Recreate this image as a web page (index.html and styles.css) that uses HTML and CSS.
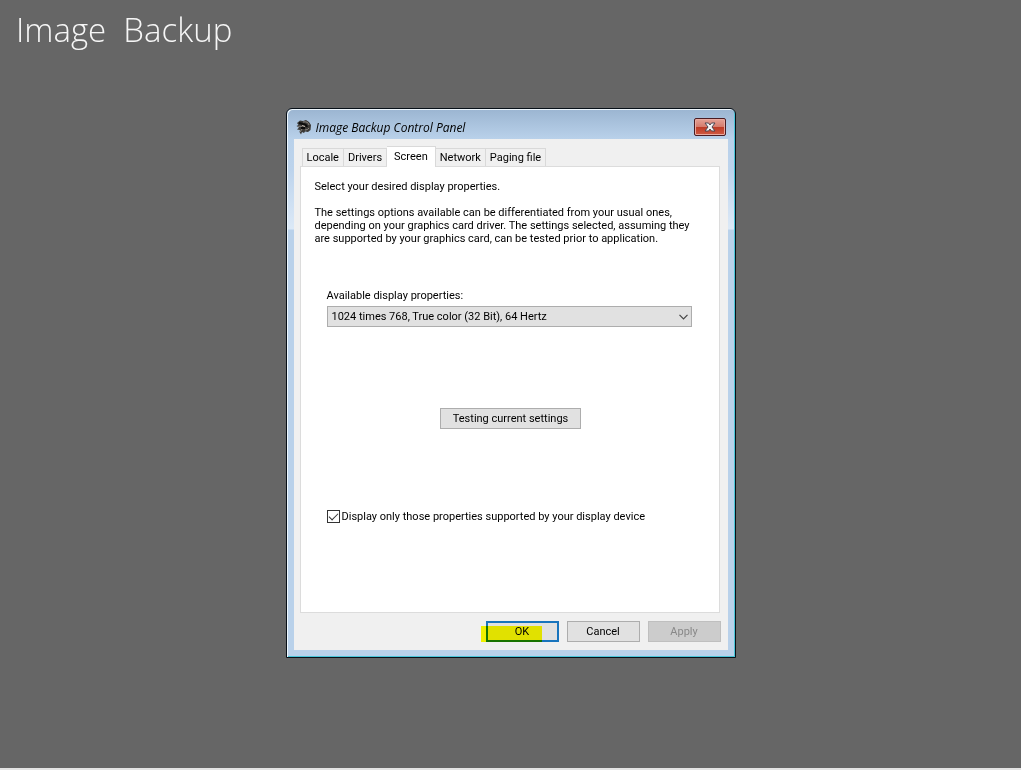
FILE: index.html
```html
<!DOCTYPE html>
<html lang="en">
<head>
<meta charset="utf-8">
<title>Image Backup</title>
<link rel="stylesheet" href="styles.css">
</head>
<body>
<div class="desktop">
  <h1 class="brand">Image&nbsp; Backup</h1>
  <main class="stage">
    <section class="window" aria-labelledby="window-title">
      <header class="titlebar">
        <svg class="app-icon" viewBox="0 0 16 16" width="16" height="16" aria-hidden="true">
          <path d="M1 4L4 1.500L7 2L10 1L13 3L15 6L14.500 11L12 13L9 12.500L8 14L6 13L5 15.500L3.500 13L4 11L1 10.500L3 8.500L.5 7L2.500 6Z" fill="#3b3936"/>
          <path d="M7 3Q12 2 13 6M2 8Q4 6 6 8M9 11Q12 11 13 9M4 13L6 10" fill="none" stroke="#8b8782" stroke-width="1"/>
          <path d="M3 4L7 5Q10 5 11 8M5 9L9 9" fill="none" stroke="#0c0c0c" stroke-width="2"/>
          <path d="M6 6.500L9 7.500" stroke="#c9beb2" stroke-width="1"/>
        </svg>
        <h2 class="window-title" id="window-title">Image Backup Control Panel</h2>
        <button class="close" type="button" aria-label="Close">
          <svg viewBox="0 0 12 10" width="12" height="10" aria-hidden="true">
            <path d="M1 1H4.500L6 3L7.500 1H11L8 5L11 9H7.500L6 7L4.500 9H1L4 5Z" fill="#f4f4f4" stroke="#4c4652" stroke-width="1"/>
          </svg>
        </button>
      </header>
      <form class="client">
        <div class="tabs" role="tablist">
          <button class="tab" type="button" role="tab">Locale</button>
          <button class="tab" type="button" role="tab">Drivers</button>
          <button class="tab tab-active" type="button" role="tab" aria-selected="true">Screen</button>
          <button class="tab" type="button" role="tab">Network</button>
          <button class="tab" type="button" role="tab">Paging file</button>
        </div>
        <div class="panel" role="tabpanel">
          <p class="lead">Select your desired display properties.</p>
          <p class="hint">The settings options available can be differentiated from your usual ones,<br>depending on your graphics card driver. The settings selected, assuming they<br>are supported by your graphics card, can be tested prior to application.</p>
          <div class="field">
            <label for="mode">Available display properties:</label>
            <div class="select-wrap">
              <select class="select" id="mode"><option>1024 times 768, True color (32 Bit), 64 Hertz</option></select>
              <svg class="chevron" viewBox="0 0 9 6" width="9" height="6" aria-hidden="true"><path d="M.5 .8L4.500 4.800L8.500 .8" fill="none" stroke="#444" stroke-width="1.200"/></svg>
            </div>
          </div>
          <button class="button test" type="button">Testing current settings</button>
          <label class="check"><input class="checkbox" type="checkbox" checked>Display only those properties supported by your display device</label>
        </div>
        <footer class="actions">
          <button class="button action ok" type="button">OK</button>
          <button class="button action" type="button">Cancel</button>
          <button class="button action" type="button" disabled>Apply</button>
        </footer>
      </form>
    </section>
  </main>
</div>
</body>
</html>
```
FILE: styles.css
```css
* { box-sizing: border-box; }
body {
  margin: 0;
  background: #666;
  color: #000;
  font: 11px/13px Roboto, "Liberation Sans", sans-serif;
}
h1, h2, p { margin: 0; }
button, select { font: inherit; color: inherit; }
.desktop {
  min-height: 100vh;
  border-bottom: 2px solid #e4e4e4;
}
.brand {
  padding: 4px 16px 0;
  color: #f6f6f6;
  font: 300 33px/52px "Open Sans", sans-serif;
}
.stage {
  display: flex;
  justify-content: center;
  padding: 52px 16px 16px;
}
.window {
  width: 450px;
  max-width: 100%;
  padding: 0 7px 7px;
  border: 1px solid #081018;
  border-radius: 6px 6px 0 0;
  background: linear-gradient(#9bb5d1, #b9d1ea 30px, #bcd3ec 60px, #dce9f7 120px, #b9d1ea 121px);
  box-shadow: inset 1px 1px #eef7fd, inset -1px -1px #49c5d8;
}
.titlebar {
  display: flex;
  align-items: center;
  height: 30px;
  padding: 6px 2px 0;
}
.window-title {
  flex: 1;
  margin-left: 4px;
  padding-top: 1px;
  font: italic 12px/16px "Open Sans", "Noto Sans", sans-serif;
}
.close {
  display: grid;
  place-items: center;
  width: 32px;
  height: 18px;
  padding: 0;
  border: 1px solid #4a1c22;
  border-radius: 2px;
  background: linear-gradient(#e5a296, #d57c6d 48%, #bd3b26 52%, #d05a42);
  box-shadow: inset 0 0 0 1px #e9aaa0;
}
.client {
  padding: 7px 8px 8px 6px;
  background: #f0f0f0;
}
.tabs {
  display: flex;
  align-items: flex-end;
  padding-left: 2px;
}
.tab {
  height: 18px;
  padding: 0 4px;
  border: 1px solid #d9d9d9;
  border-width: 1px 1px 0 0;
  background: #f0f0f0;
}
.tab:first-child { border-left-width: 1px; }
.tab-active {
  position: relative;
  height: 21px;
  margin: 0 0 -1px;
  padding: 0 7px 2px;
  background: #fff;
}
.panel {
  display: flex;
  flex-direction: column;
  height: 447px;
  padding: 13px 12px 0 14px;
  border: 1px solid #dcdcdc;
  background: #fff;
}
.hint { margin-top: 13px; }
.field {
  margin: 44px 15px 0 12px;
}
.select-wrap {
  display: grid;
  align-items: center;
  margin-top: 4px;
}
.select {
  grid-area: 1 / 1;
  appearance: none;
  width: 100%;
  height: 21px;
  padding: 0 20px 0 4px;
  border: 1px solid #adadad;
  border-radius: 0;
  background: #e1e1e1;
}
.chevron {
  grid-area: 1 / 1;
  justify-self: end;
  margin-right: 4px;
  pointer-events: none;
}
.button {
  height: 21px;
  padding: 0 4px;
  border: 1px solid #adadad;
  background: #e1e1e1;
}
.test {
  align-self: center;
  width: 141px;
  margin-top: 81px;
}
.check {
  display: flex;
  align-items: center;
  gap: 2px;
  margin: 81px 0 0 12px;
}
.checkbox {
  appearance: none;
  display: grid;
  justify-content: center;
  width: 13px;
  height: 13px;
  margin: 0;
  border: 1px solid #333;
  background: #fff;
}
.checkbox:checked::before {
  content: "";
  width: 8px;
  height: 4px;
  margin-top: 2px;
  border: solid #333;
  border-width: 0 0 1px 1px;
  transform: rotate(-45deg);
}
.actions {
  display: flex;
  justify-content: flex-end;
  gap: 8px;
  margin-right: -1px;
  padding-top: 8px;
}
.action { width: 73px; }
.action:disabled {
  border-color: #bfbfbf;
  background: #ccc;
  color: #888;
}
.ok {
  position: relative;
  border: 2px solid #1874bd;
}
.ok::after {
  content: "";
  position: absolute;
  inset: 3px 15px -2px -7px;
  background: #ff0;
  mix-blend-mode: multiply;
}
```
